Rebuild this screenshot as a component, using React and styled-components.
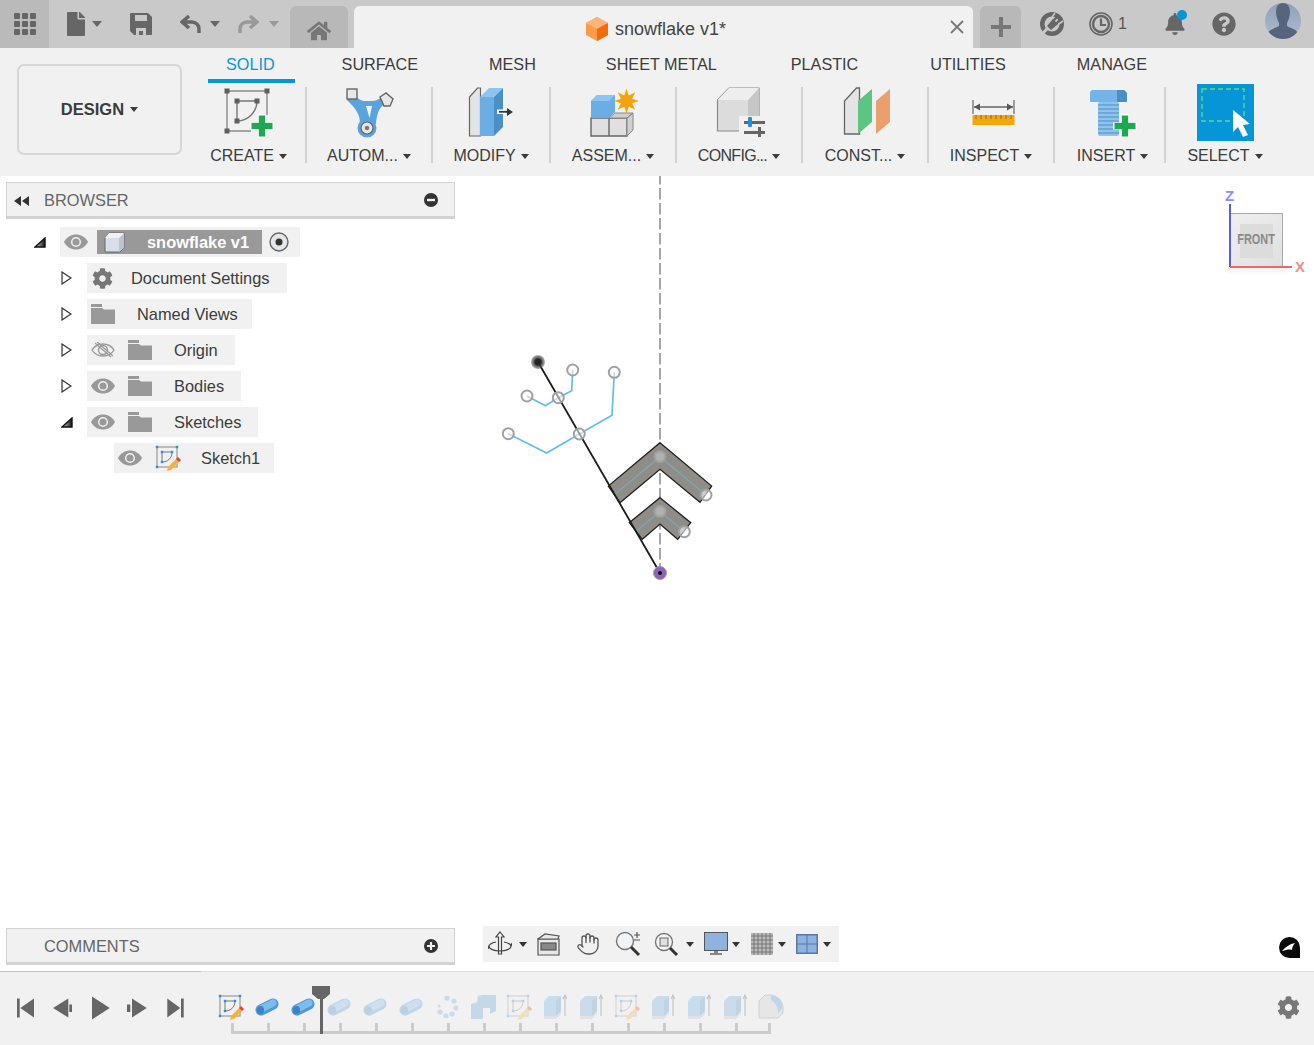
import React from "react";
import styled, { createGlobalStyle } from "styled-components";
import { FaBell, FaCog, FaFile, FaHome, FaQuestionCircle } from "react-icons/fa";
import { Hand } from "lucide-react";

const GlobalStyle = createGlobalStyle`
  html, body {
    margin: 0;
    padding: 0;
    background: #ffffff;
    font-family: "Liberation Sans", Arial, sans-serif;
    color: #3c3c3c;
  }
  * { box-sizing: border-box; }
`;

const Page = styled.div`
  width: 1314px;
  height: 1045px;
  display: flex;
  flex-direction: column;
  overflow: hidden;
`;

/* ---------- top bar ---------- */

const TopBar = styled.header`
  height: 48px;
  flex: none;
  display: flex;
  background: #c9c9c9;
`;

const GridCell = styled.div`
  width: 49px;
  display: flex;
  align-items: center;
  justify-content: center;
  background: #bababa;
`;

const BarItem = styled.div`
  height: 48px;
  flex: none;
  margin-left: ${(p) => p.$ml || 0}px;
  display: flex;
  align-items: center;
  color: #666666;
`;

const Caret = styled.span`
  display: inline-block;
  flex: none;
  width: 0;
  height: 0;
  margin-left: ${(p) => p.$ml || 0}px;
  border-left: ${(p) => p.$size || 4.5}px solid transparent;
  border-right: ${(p) => p.$size || 4.5}px solid transparent;
  border-top: ${(p) => (p.$size || 4.5) + 1}px solid ${(p) => p.$color || "#3c3c3c"};
`;

const HomeTab = styled.div`
  width: 58px;
  height: 42px;
  margin: 6px 0 0 ${(p) => p.$ml}px;
  padding-top: 13px;
  display: flex;
  justify-content: center;
  background: #b8b8b8;
  border-radius: 6px 6px 0 0;
  color: #777777;
`;

const DocTab = styled.div`
  position: relative;
  width: 619px;
  height: 42px;
  margin: 6px 0 0 6px;
  padding: 4px 15px 0 0;
  display: flex;
  align-items: center;
  justify-content: center;
  gap: 7px;
  background: #f1f1f1;
  border-radius: 6px 6px 0 0;
  font-size: 18px;
  color: #444444;
`;

const CloseGlyph = styled.svg`
  position: absolute;
  right: 9px;
  top: 14px;
`;

const PlusTab = styled.div`
  width: 41px;
  height: 42px;
  margin: 6px 0 0 7px;
  display: flex;
  align-items: center;
  justify-content: center;
  background: #b8b8b8;
  border-radius: 6px 6px 0 0;
`;

const JobCount = styled.span`
  margin-left: 5px;
  font-size: 16px;
  color: #555555;
`;

const BellWrap = styled.div`
  position: relative;
  display: flex;
`;

const BellDot = styled.span`
  position: absolute;
  right: -1px;
  top: -3px;
  width: 10px;
  height: 10px;
  border-radius: 50%;
  background: #0696d7;
`;

const Avatar = styled.div`
  width: 36px;
  height: 36px;
  margin-top: -6px;
  border-radius: 50%;
  overflow: hidden;
  background: linear-gradient(#8fa0b8, #aebcd2);
`;

/* ---------- ribbon ---------- */

const Ribbon = styled.section`
  height: 128px;
  flex: none;
  display: flex;
  gap: 8px;
  padding-left: 17px;
  background: #f1f1f1;
`;

const DesignButton = styled.div`
  width: 165px;
  height: 91px;
  margin-top: 16px;
  display: flex;
  align-items: center;
  justify-content: center;
  gap: 6px;
  border: 2px solid #d6d6d6;
  border-radius: 7px;
  font-size: 16.5px;
  font-weight: 700;
`;

const RibbonBody = styled.div`
  display: flex;
  flex-direction: column;
`;

const TabRow = styled.nav`
  height: 36px;
  display: flex;
  padding-left: 18px;
`;

const Tab = styled.div`
  height: 35px;
  margin-left: ${(p) => p.$ml || 0}px;
  padding: 7px 20px 0 18px;
  font-size: 16.2px;
  line-height: 18px;
  color: ${(p) => (p.$active ? "#0696d7" : "#3c3c3c")};
  border-bottom: 4px solid ${(p) => (p.$active ? "#0696d7" : "transparent")};
`;

const ToolRow = styled.div`
  display: flex;
`;

const ToolGroup = styled.div`
  width: ${(p) => p.$width}px;
  padding-left: ${(p) => p.$pad || 0}px;
  display: flex;
  flex-direction: column;
  align-items: center;
`;

const IconSlot = styled.div`
  height: 62px;
  display: flex;
  align-items: flex-start;
`;

const ToolLabel = styled.div`
  display: flex;
  align-items: center;
  gap: 5px;
  height: 18px;
  margin-top: 1px;
  font-size: 16px;
  white-space: nowrap;
  letter-spacing: ${(p) => p.$spacing || 0}px;
`;

const Separator = styled.div`
  width: 2px;
  height: 76px;
  margin-top: 3px;
  flex: none;
  background: #d2d2d2;
`;

/* ---------- viewport ---------- */

const Viewport = styled.main`
  position: relative;
  flex: 1;
  min-height: 0;
  display: flex;
  flex-direction: column;
  justify-content: space-between;
  padding: 6px 14px 6px 6px;
  background: #ffffff;
`;

const SketchCanvas = styled.svg`
  position: absolute;
  left: 0;
  top: 0;
`;

const Panel = styled.div`
  position: relative;
  width: 449px;
  height: 37px;
  flex: none;
  display: flex;
  align-items: center;
  padding: 1px 0 0 37px;
  background: #f1f1f1;
  border: 1px solid #d2d2d2;
  border-bottom-width: 3px;
  font-size: 16.4px;
  color: #666666;
`;

const PanelArrows = styled.svg`
  position: absolute;
  left: 7px;
  top: 13px;
`;

const PanelToggle = styled.svg`
  position: absolute;
  right: 16px;
  top: 10px;
`;

const LeftColumn = styled.div`
  position: relative;
  width: 449px;
`;

const Tree = styled.ul`
  list-style: none;
  margin: 8px 0 0;
  padding: 0;
  display: flex;
  flex-direction: column;
  gap: 6px;
`;

const TreeRow = styled.li`
  display: flex;
  align-items: center;
  height: 30px;
  padding-left: ${(p) => 28 + p.$level * 27}px;
`;

const Expander = styled.div`
  width: 26px;
  flex: none;
  display: flex;
  align-items: center;
`;

const Node = styled.div`
  display: flex;
  height: 30px;
  background: #f1f1f1;
  font-size: 16.4px;
  color: #3c3c3c;
`;

const NodeIcon = styled.div`
  width: ${(p) => p.$width || 37}px;
  flex: none;
  display: flex;
  align-items: center;
  padding-left: ${(p) => p.$pad ?? 4}px;
  color: #777777;
`;

const NodeLabel = styled.div`
  display: flex;
  align-items: center;
  padding: 0 ${(p) => p.$right}px 0 13px;
  white-space: nowrap;
`;

const SelectedNode = styled.div`
  width: 165px;
  height: 24px;
  margin-top: 3px;
  display: flex;
  align-items: center;
  gap: 22px;
  padding-left: 7px;
  background: #999999;
  color: #ffffff;
  font-weight: 700;
`;

const RadioCell = styled.div`
  width: 38px;
  display: flex;
  align-items: center;
  padding-left: 7px;
`;

const BottomRow = styled.div`
  position: relative;
  display: flex;
  align-items: flex-start;
`;

const NavBar = styled.div`
  width: 356px;
  height: 36px;
  margin: -2px 0 0 28px;
  display: flex;
  align-items: center;
  padding-left: 5px;
  background: #f1f1f1;
`;

const NavItem = styled.div`
  display: flex;
  flex: none;
  margin-left: ${(p) => p.$ml || 0}px;
  color: #555555;
`;

const BrandMark = styled.svg`
  margin: 9px 0 0 auto;
`;

const ViewCube = styled.div`
  position: absolute;
  left: 1216px;
  top: 12px;
  width: 88px;
  height: 88px;
`;

const CubeFace = styled.div`
  position: absolute;
  left: 14px;
  top: 25px;
  width: 53px;
  height: 54px;
  display: flex;
  align-items: center;
  justify-content: center;
  background: linear-gradient(135deg, #efefef, #e0e0e0);
  border: 1px solid #a8a8a8;
  border-left: none;
  border-bottom: none;
`;

const CubeCentre = styled.div`
  width: 33px;
  height: 34px;
  display: flex;
  align-items: center;
  justify-content: center;
  background: #dcdcdc;
`;

const FrontText = styled.span`
  display: inline-block;
  margin-top: -3px;
  transform: scaleX(0.78);
  font-size: 14px;
  font-weight: 700;
  color: #8a8a8a;
`;

const AxisZ = styled.div`
  position: absolute;
  left: 13px;
  top: 16px;
  width: 2px;
  height: 63px;
  background: #5a5cf0;
`;

const AxisX = styled.div`
  position: absolute;
  left: 14px;
  top: 78px;
  width: 62px;
  height: 2px;
  background: #e86a6a;
  box-shadow: -4px 3px 4px rgba(0, 0, 0, 0.12);
`;

const AxisLetter = styled.span`
  position: absolute;
  left: ${(p) => p.$left}px;
  top: ${(p) => p.$top}px;
  font-size: 15px;
  font-weight: 700;
  color: ${(p) => p.$color};
`;

/* ---------- timeline ---------- */

const Timeline = styled.footer`
  position: relative;
  height: 74px;
  flex: none;
  display: flex;
  align-items: flex-start;
  background: #f1f1f1;
  border-top: 1px solid #dcdcdc;

  &::before {
    content: "";
    position: absolute;
    left: 0;
    top: -1px;
    width: 201px;
    height: 1px;
    background: #c4c4c4;
  }
`;

const Controls = styled.div`
  display: flex;
  gap: 14px;
  margin: 23px 0 0 14px;

  svg {
    overflow: visible;
  }
`;

const Track = styled.div`
  position: relative;
  margin: 20px 0 0 23px;
`;

const TrackItems = styled.div`
  display: flex;
`;

const TrackItem = styled.div`
  width: 36px;
  height: 30px;
  display: flex;
  align-items: center;
  justify-content: center;
  opacity: ${(p) => (p.$faded ? 0.3 : 1)};
`;

const Ruler = styled.div`
  display: flex;
  margin: 1px 0 0 18px;
`;

const RulerStep = styled.div`
  width: 36px;
  height: 11px;
  border-left: 3px solid #cccccc;
  border-bottom: 3px solid #cccccc;
  border-right: ${(p) => (p.$last ? "3px solid #cccccc" : "none")};
`;

const Marker = styled.svg`
  position: absolute;
  left: 98px;
  top: -6px;
`;

const SettingsButton = styled.div`
  margin: 24px 14px 0 auto;
  display: flex;
  color: #777777;
`;

/* ---------- icons ---------- */

const GridIcon = () => (
  <svg width="22" height="22" viewBox="0 0 22 22" fill="#666666">
    {[0, 8, 16].flatMap((y) =>
      [0, 8, 16].map((x) => <rect key={`${x}-${y}`} x={x} y={y} width="6" height="6" rx="1" />)
    )}
  </svg>
);

const SaveIcon = () => (
  <svg width="22" height="22" viewBox="0 0 22 22">
    <path d="M1 0h17l4 4v17a1 1 0 0 1-1 1H4l-4-4V1a1 1 0 0 1 1-1z" fill="#666666" />
    <rect x="5" y="2" width="12" height="6" fill="#c9c9c9" />
    <path d="M6 22v-7h10v7h-3v-4H9v4z" fill="#c9c9c9" />
  </svg>
);

const UndoIcon = ({ color, flip }) => (
  <svg width="21" height="18" viewBox="0 0 21 18" style={flip ? { transform: "scaleX(-1)" } : undefined}>
    <path d="M9 1 2 7l7 6M3 7h9a7 7 0 0 1 7 7v4" fill="none" stroke={color} strokeWidth="3.4" />
  </svg>
);

const CubeLogo = () => (
  <svg width="22" height="24" viewBox="0 0 22 24">
    <path d="M11 0 22 6v12l-11 6L0 18V6z" fill="#ff9a4a" />
    <path d="M11 0 22 6 11 12 0 6z" fill="#ffb27a" />
    <path d="M11 12 22 6v12l-11 6z" fill="#f26d0a" />
  </svg>
);

const UpdateIcon = () => (
  <svg width="24" height="24" viewBox="0 0 24 24">
    <circle cx="12" cy="12" r="12" fill="#666666" />
    <circle cx="12" cy="12" r="7.500" fill="#c9c9c9" />
    <path d="M3 21 9 15" stroke="#c9c9c9" strokeWidth="3" />
    <path d="M7 14 13 7l5 5-7 6z" fill="#666666" />
    <path d="M13 9l5-5M16 12l5-5" stroke="#666666" strokeWidth="2.400" />
    <path d="M15 1 12 5M23 9l-4 3" stroke="#c9c9c9" strokeWidth="1.600" />
  </svg>
);

const ClockIcon = () => (
  <svg width="24" height="24" viewBox="0 0 24 24" fill="none" stroke="#666666">
    <circle cx="12" cy="12" r="11" strokeWidth="1.6" />
    <circle cx="12" cy="12" r="8" strokeWidth="2.4" />
    <path d="M12 6.5V13h5" strokeWidth="2.2" />
  </svg>
);

const AvatarFigure = () => (
  <svg width="36" height="36" viewBox="0 0 36 36" fill="#56657c">
    <path d="M11 9c0-6 3-9 7-9s7 3 7 9c0 5-2 9-3 11v3c3 2 9 3 11 7v6H3v-6c2-4 8-5 11-7v-3c-1-2-3-6-3-11z" />
  </svg>
);

const Plus = ({ x, y, size = 21, color = "#1fa84f" }) => {
  const t = size * 0.3;
  const half = size / 2;
  return (
    <g fill={color}>
      <rect x={x - half} y={y - t / 2} width={size} height={t} />
      <rect x={x - t / 2} y={y - half} width={t} height={size} />
    </g>
  );
};

const CreateIcon = () => (
  <svg width="54" height="54" viewBox="0 0 54 54">
    <path d="M5 7h40M5 7v40M5 47h24M45 7v24" stroke="#8a8a8a" strokeWidth="1.4" fill="none" />
    <path d="M15 17h20M15 17v20M35 17c0 10-8 20-20 20" stroke="#777777" strokeWidth="1.4" fill="none" />
    {[[5, 7], [45, 7], [5, 47], [15, 17], [35, 17], [15, 37]].map(([x, y]) => (
      <rect key={`${x}-${y}`} x={x - 2.5} y={y - 2.5} width="5" height="5" fill="#5f5f5f" />
    ))}
    <Plus x={40} y={42} size={24} color="#ffffff" />
    <Plus x={40} y={42} />
  </svg>
);

const AutomateIcon = () => (
  <svg width="54" height="54" viewBox="0 0 54 54">
    <path d="M9 11c6 2 10 6 13 6h8c4 0 8-2 12-6l5 5c-4 3-9 7-11 13-1 3-2 7-2 11H18c0-5-1-9-3-12-2-4-6-8-10-12z" fill="#5ba3dc" />
    <path d="M24 22h6l-2.500 12z" fill="#f1f1f1" />
    <rect x="5" y="5" width="10" height="10" fill="#e8e8e8" stroke="#666666" strokeWidth="1.4" />
    <path d="M38 13l6-4 7 6-3 7h-6z" fill="#e8e8e8" stroke="#666666" strokeWidth="1.4" />
    <circle cx="25" cy="44" r="9.500" fill="#5ba3dc" />
    <circle cx="25" cy="44" r="6" fill="#e8e8e8" stroke="#666666" strokeWidth="1.2" />
    <circle cx="25" cy="44" r="2.300" fill="#777777" />
  </svg>
);

const ModifyIcon = () => (
  <svg width="54" height="54" viewBox="0 0 54 54">
    <path d="M5.5 52V13l8-9h3v48z" fill="#e4e4e4" stroke="#666666" strokeWidth="1.2" />
    <path d="M16 13 25 4h14l-9 9z" fill="#8cc4f2" />
    <rect x="16" y="13" width="14" height="39" fill="#6aaee3" />
    <path d="M30 13 39 4v39l-9 9z" fill="#4a90c8" />
    <rect x="33" y="25.500" width="8" height="4.500" fill="#ffffff" />
    <path d="M35 27.800h9" stroke="#333333" strokeWidth="1.800" />
    <path d="M43 24v8l6-4z" fill="#333333" />
  </svg>
);

const starPoints = Array.from({ length: 16 }, (_, i) => {
  const angle = (i * Math.PI) / 8;
  const radius = i % 2 === 0 ? 12.5 : 6;
  return `${40.5 + radius * Math.sin(angle)},${17 - radius * Math.cos(angle)}`;
}).join(" ");

const AssembleIcon = () => (
  <svg width="54" height="54" viewBox="0 0 54 54">
    <path d="M5 52V34h18v18zM23 52V34h18v18z" fill="#e0e0e0" stroke="#666666" strokeWidth="1.4" />
    <path d="M41 34l6-5v17l-6 6zM23 34l6-5h18l-6 5z" fill="#d0d0d0" stroke="#888888" strokeWidth="1" />
    <path d="M5 34V17l6-6h18v17l-6 6z" fill="#6aaee3" />
    <path d="M5 17l6-6h18l-6 6z" fill="#8cc4f2" />
    <polygon points={starPoints} fill="#f5a30a" />
  </svg>
);

const ConfigureIcon = () => (
  <svg width="54" height="54" viewBox="0 0 54 54">
    <path d="M5.500 16 17 4h30v31L36 47H5.500z" fill="#dcdcdc" stroke="#8a8a8a" strokeWidth="1.2" />
    <path d="M36 16 47 4v31L36 47z" fill="#c6c6c6" />
    <path d="M5.500 16 17 4h30L36 16z" fill="#eeeeee" />
    <rect x="27" y="32" width="27" height="22" fill="#f1f1f1" />
    <rect x="32" y="37" width="21" height="3" fill="#666666" />
    <rect x="32" y="47" width="21" height="3" fill="#666666" />
    <rect x="36" y="33" width="4" height="10" rx="1" fill="#1f8fe0" />
    <rect x="46" y="43" width="3" height="10" fill="#666666" />
  </svg>
);

const ConstructIcon = () => (
  <svg width="54" height="54" viewBox="0 0 54 54">
    <path d="M6.500 50V17l12-13h3v46z" fill="#e4e4e4" stroke="#666666" strokeWidth="1.3" />
    <path d="M20 17 34 5v33L20 50z" fill="#5cc581" />
    <path d="M38 17 52 5v33L38 50z" fill="#e9a06c" />
  </svg>
);

const InspectIcon = () => (
  <svg width="54" height="54" viewBox="0 0 54 54">
    <path d="M9 16v14M50 16v14" stroke="#666666" strokeWidth="1.2" />
    <path d="M10 23h39" stroke="#666666" strokeWidth="1.6" />
    <path d="M10 23l6-3.500v7zM49 23l-6-3.500v7z" fill="#555555" />
    <rect x="8.500" y="31" width="42" height="10" fill="#f5a60f" />
    <path d="M12 31v4M17 31v4M22 31v4M27 31v4M32 31v4M37 31v4M42 31v4M47 31v4" stroke="#8a6a20" strokeWidth="1" />
  </svg>
);

const InsertIcon = () => (
  <svg width="54" height="54" viewBox="0 0 54 54">
    <g transform="translate(-3 0)">
      <rect x="15" y="18" width="21" height="34" rx="2" fill="#90c2ee" />
      {[21, 25, 29, 33, 37, 41, 45, 49].map((y) => (
        <path key={y} d="M15 0h21" transform={`translate(0 ${y})`} stroke="#5c9bd0" strokeWidth="1.3" />
      ))}
      <path d="M9 6h32l3 3v9H7V8z" fill="#74b4ea" />
      <path d="M34 6h7l3 3v9H34z" fill="#4a90c8" />
      <Plus x={42} y={42} size={24} color="#ffffff" />
      <Plus x={42} y={42} />
    </g>
  </svg>
);

const SelectIcon = () => (
  <svg width="57" height="57" viewBox="0 0 57 57">
    <rect width="57" height="57" fill="#0696d7" />
    <rect x="5" y="5" width="42" height="32" fill="none" stroke="#5fd38a" strokeWidth="1.4" strokeDasharray="5 3" />
    <path d="M36 26v22l5-5 5 10 5-2-5-10 7-1z" fill="#ffffff" />
  </svg>
);

const EyeIcon = ({ off }) => (
  <svg width="24" height="16" viewBox="0 0 24 16">
    {off ? (
      <>
        <path d="M1 8c5-8 17-8 22 0-5 8-17 8-22 0z" fill="none" stroke="#999999" strokeWidth="1.400" />
        <circle cx="12" cy="8" r="4.500" fill="none" stroke="#999999" strokeWidth="1.400" />
        <path d="M4 1l16 14M6 0l16 14" stroke="#999999" strokeWidth="1.200" />
      </>
    ) : (
      <>
        <path d="M0 8c5-10 19-10 24 0-5 10-19 10-24 0z" fill="#999999" />
        <circle cx="12" cy="8" r="4.300" fill="none" stroke="#f1f1f1" strokeWidth="1.500" />
      </>
    )}
  </svg>
);

const FolderIcon = () => (
  <svg width="24" height="20" viewBox="0 0 24 20" fill="#999999">
    <rect x="0" y="0" width="11" height="3" />
    <path d="M0 4h11l2 1.500h11V20H0z" />
  </svg>
);

const SmallCube = () => (
  <svg width="21" height="21" viewBox="0 0 21 21">
    <path d="M1 6 5 1h15v15l-4 4H2a1 1 0 0 1-1-1z" fill="#d9dfe8" stroke="#666666" strokeWidth="1" />
    <path d="M15 6 20 1v15l-5 4z" fill="#bcc4d0" />
    <path d="M1 6 5 1h15l-5 5z" fill="#eef1f5" />
  </svg>
);

const SketchIcon = () => (
  <svg width="26" height="26" viewBox="0 0 26 26">
    <rect x="2" y="2" width="20" height="20" fill="none" stroke="#999999" strokeWidth="1.2" />
    <path d="M7 7h10M7 7v10M17 7c0 6-4 10-10 10" fill="none" stroke="#777777" strokeWidth="1" />
    {[[2, 2], [22, 2], [2, 22], [7, 7], [17, 7], [7, 17]].map(([x, y]) => (
      <rect key={`${x}-${y}`} x={x - 1.2} y={y - 1.2} width="2.400" height="2.400" fill="#2b8fe0" />
    ))}
    <path d="M13 22l8-8 3 3-8 8-4 1z" fill="#f3b33d" />
    <path d="M21 14l2-2 3 3-2 2z" fill="#ef3b3b" />
  </svg>
);

const TubeIcon = () => (
  <svg width="24" height="18" viewBox="0 0 24 18">
    <path d="M6 12 18 6" stroke="#4f97d6" strokeWidth="11" strokeLinecap="round" />
    <path d="M6 11 18 5" stroke="#7dbcf0" strokeWidth="7" strokeLinecap="round" />
    <ellipse cx="5.500" cy="12" rx="3.500" ry="4" fill="#3d83c2" />
  </svg>
);

const DotsIcon = () => (
  <svg width="22" height="22" viewBox="0 0 22 22" fill="#6aaee3">
    {[[11, 2], [18, 5], [20, 12], [16, 18], [10, 20], [4, 16], [3, 10]].map(([x, y], i) => (
      <circle key={i} cx={x} cy={y} r={i === 6 ? 1.5 : 2.6} />
    ))}
  </svg>
);

const UnionIcon = () => (
  <svg width="26" height="24" viewBox="0 0 26 24">
    <path d="M8 0h18v16l-6 3v-6H13v11H1V9l6-1z" fill="#5b9fd6" />
    <path d="M1 9l7-3V0l4 0-4 3v5z" fill="#8cc4f2" />
  </svg>
);

const ExtrudeIcon = () => (
  <svg width="24" height="26" viewBox="0 0 24 26">
    <path d="M1 24V7l5-5h12v17l-5 5z" fill="#6aaee3" />
    <path d="M13 7l5-5v17l-5 5z" fill="#4a90c8" />
    <path d="M1 22h12l5-5v3l-5 5H1z" fill="#c0c0c0" />
    <path d="M22 22V2M20 5l2-4 2 4" stroke="#666666" strokeWidth="1.2" fill="none" />
  </svg>
);

const FilletIcon = () => (
  <svg width="26" height="26" viewBox="0 0 26 26">
    <path d="M1 24V7l6-6h6c7 1 12 6 12 13v5l-5 5z" fill="#d0d0d0" stroke="#888888" />
    <path d="M13 1c7 1 12 6 12 13l-5 5c0-7-3-11-7-13z" fill="#4a9ae0" />
  </svg>
);

const OrbitIcon = () => (
  <svg width="24" height="26" viewBox="0 0 24 26" fill="none" stroke="#444444" strokeWidth="1.200">
    <path d="M12 1l4 5h-2.500v17h-3V6H8z" fill="#f1f1f1" />
    <path d="M8 11C3 12 1 14 1 15c0 3 5 5 11 5s11-2 11-5c0-1-2-3-7-4" />
    <path d="M1 15l-1 3M23 15l1-3" />
  </svg>
);

const FilmIcon = () => (
  <svg width="23" height="24" viewBox="0 0 23 24" fill="#e8e8e8" stroke="#555555" strokeWidth="1.200">
    <path d="M1 7V23h21V7z" />
    <path d="M1 7l7-5 14 2-1 3z" />
    <rect x="4" y="11" width="15" height="7" fill="#888888" />
  </svg>
);

const ZoomInIcon = () => (
  <svg width="26" height="26" viewBox="0 0 26 26" fill="none">
    <circle cx="10" cy="10" r="8.500" fill="#eef4fa" stroke="#777777" strokeWidth="1.400" />
    <path d="M16 16l8 8" stroke="#333333" strokeWidth="3" />
    <path d="M22 1v6M19 4h6M19 9h6" stroke="#555555" strokeWidth="1.200" />
  </svg>
);

const ZoomWindowIcon = () => (
  <svg width="24" height="24" viewBox="0 0 24 24" fill="none">
    <circle cx="10" cy="10" r="8.500" fill="#f5f5f5" stroke="#777777" strokeWidth="1.400" />
    <rect x="6" y="6" width="8" height="8" fill="#e0e0e0" stroke="#666666" />
    <path d="M16 16l7 7" stroke="#333333" strokeWidth="3" />
  </svg>
);

const DisplayIcon = () => (
  <svg width="24" height="24" viewBox="0 0 24 24">
    <rect x="0.500" y="0.500" width="23" height="18" fill="#8fb2de" stroke="#555555" />
    <path d="M10 19h4v2h4v2H6v-2h4z" fill="#888888" />
  </svg>
);

const GridDisplayIcon = () => (
  <svg width="22" height="22" viewBox="0 0 22 22">
    <rect width="22" height="22" fill="#bbbbbb" />
    <path d="M0 3h22M0 7h22M0 11h22M0 15h22M0 19h22M3 0v22M7 0v22M11 0v22M15 0v22M19 0v22" stroke="#777777" strokeWidth="1" />
  </svg>
);

const ViewportsIcon = () => (
  <svg width="22" height="20" viewBox="0 0 22 20">
    <rect width="22" height="20" fill="#5878aa" />
    <rect x="1.500" y="1.500" width="9" height="8" fill="#8fb2de" />
    <rect x="11.500" y="1.500" width="9" height="8" fill="#8fb2de" />
    <rect x="1.500" y="10.500" width="9" height="8" fill="#8fb2de" />
    <rect x="11.500" y="10.500" width="9" height="8" fill="#8fb2de" />
  </svg>
);

const Triangle = ({ open, id }) =>
  open ? (
    <svg width="12" height="11" viewBox="0 0 12 11">
      <defs>
        <linearGradient id={id} x1="0" x2="1">
          <stop offset="0" stopColor="#dddddd" />
          <stop offset="1" stopColor="#111111" />
        </linearGradient>
      </defs>
      <path d="M1 10 11 1v9z" fill={`url(#${id})`} stroke="#111111" strokeWidth="1.400" />
    </svg>
  ) : (
    <svg width="11" height="14" viewBox="0 0 11 14">
      <path d="M1 1l9 6-9 6z" fill="#ffffff" stroke="#333333" strokeWidth="1.200" />
    </svg>
  );

/* ---------- data ---------- */

const tabs = [
  { label: "SOLID", active: true },
  { label: "SURFACE", ml: 29 },
  { label: "MESH", ml: 33 },
  { label: "SHEET METAL", ml: 32 },
  { label: "PLASTIC", ml: 36 },
  { label: "UTILITIES", ml: 34 },
  { label: "MANAGE", ml: 33 },
];

const tools = [
  { label: "CREATE", width: 115, pad: 2, Icon: CreateIcon },
  { label: "AUTOM...", width: 124, Icon: AutomateIcon },
  { label: "MODIFY", width: 116, Icon: ModifyIcon },
  { label: "ASSEM...", width: 124, Icon: AssembleIcon },
  { label: "CONFIG...", width: 124, spacing: -0.7, Icon: ConfigureIcon },
  { label: "CONST...", width: 124, Icon: ConstructIcon },
  { label: "INSPECT", width: 124, Icon: InspectIcon },
  { label: "INSERT", width: 109, pad: 6, Icon: InsertIcon },
  { label: "SELECT", width: 118, Icon: SelectIcon },
];

const treeRows = [
  { level: 1, label: "Document Settings", right: 18, cells: [{ kind: "gear", width: 31 }] },
  { level: 1, label: "Named Views", right: 14, cells: [{ kind: "folder" }] },
  { level: 1, label: "Origin", right: 17, cells: [{ kind: "eyeOff" }, { kind: "folder" }] },
  { level: 1, label: "Bodies", right: 17, cells: [{ kind: "eye" }, { kind: "folder" }] },
  { level: 1, label: "Sketches", right: 17, open: true, cells: [{ kind: "eye" }, { kind: "folder" }] },
  { level: 2, label: "Sketch1", right: 14, leaf: true, cells: [{ kind: "eye" }, { kind: "sketch" }] },
];

const cellIcon = (kind) => {
  if (kind === "gear") return <FaCog size={21} />;
  if (kind === "folder") return <FolderIcon />;
  if (kind === "eye") return <EyeIcon />;
  if (kind === "eyeOff") return <EyeIcon off />;
  return <SketchIcon />;
};

const timelineItems = [
  { Icon: SketchIcon },
  { Icon: TubeIcon },
  { Icon: TubeIcon },
  { Icon: TubeIcon, faded: true },
  { Icon: TubeIcon, faded: true },
  { Icon: TubeIcon, faded: true },
  { Icon: DotsIcon, faded: true },
  { Icon: UnionIcon, faded: true },
  { Icon: SketchIcon, faded: true },
  { Icon: ExtrudeIcon, faded: true },
  { Icon: ExtrudeIcon, faded: true },
  { Icon: SketchIcon, faded: true },
  { Icon: ExtrudeIcon, faded: true },
  { Icon: ExtrudeIcon, faded: true },
  { Icon: ExtrudeIcon, faded: true },
  { Icon: FilletIcon, faded: true },
];

const transport = [
  "M3 3.500h2.700v19H3zM6.300 13 20 3.500v19z",
  "M1 13 16.300 3.500v19zM17.300 9.500H20V17h-2.700z",
  "M2 1.500 19.700 13 2 24.500z",
  "M-1 9.500h3.300V17H-1zM4 3.500 18.700 13 4 22.500z",
  "M1.300 3.500 14.300 13l-13 9.500zM15 3.500h2.700v19H15z",
];

const navItems = [
  { Icon: OrbitIcon },
  { caret: true, ml: 7 },
  { Icon: FilmIcon, ml: 10 },
  { Icon: () => <Hand size={24} strokeWidth={1.3} />, ml: 16 },
  { Icon: ZoomInIcon, ml: 15 },
  { Icon: ZoomWindowIcon, ml: 13 },
  { caret: true, ml: 8 },
  { Icon: DisplayIcon, ml: 10 },
  { caret: true, ml: 4 },
  { Icon: GridDisplayIcon, ml: 11 },
  { caret: true, ml: 5 },
  { Icon: ViewportsIcon, ml: 10 },
  { caret: true, ml: 5 },
];

const Joint = ({ x, y, r = 5.5, fill = "#ffffff", fillOpacity = 0.55 }) => (
  <circle cx={x} cy={y - 176} r={r} fill={fill} fillOpacity={fillOpacity} stroke="#a0a0a0" strokeWidth="2" />
);

const toCanvas = (points) => points.map(([x, y]) => `${x},${y - 176}`).join(" ");

const SnowflakeSketch = () => (
  <SketchCanvas width="1314" height="795" viewBox="0 0 1314 795">
    <defs>
      <radialGradient id="startDot">
        <stop offset="0.4" stopColor="#222222" />
        <stop offset="1" stopColor="#666666" stopOpacity="0.5" />
      </radialGradient>
    </defs>
    <path d="M660 0V397" stroke="#a6a6a6" strokeWidth="2" strokeDasharray="11.500 3.500" strokeDashoffset="3" />
    <polygon
      points={toCanvas([[660, 442.7], [711.7, 486], [700, 502.3], [660, 469.3], [620, 502.7], [608.3, 486]])}
      fill="#8f8d85"
      stroke="#222222"
      strokeWidth="1.300"
    />
    <polygon
      points={toCanvas([[660, 497.7], [690.7, 522.7], [677.7, 539.3], [660, 524], [642.3, 539.3], [629.3, 522.7]])}
      fill="#8f8d85"
      stroke="#222222"
      strokeWidth="1.300"
    />
    <g fill="none" stroke="#63bdea" strokeWidth="1.700">
      <polyline points={toCanvas([[527, 396], [545.3, 405.7], [558.3, 397.7], [571.7, 390.7], [572.7, 370]])} />
      <polyline points={toCanvas([[614.3, 372.3], [612, 415.3], [579.3, 434], [546.7, 453], [508.3, 433.7]])} />
      <polyline points={toCanvas([[615, 494.3], [660, 456.7], [706, 495]])} strokeOpacity="0.55" strokeWidth="1.300" />
      <polyline points={toCanvas([[636.7, 530.7], [660, 511.3], [684.3, 531.7]])} strokeOpacity="0.55" strokeWidth="1.300" />
    </g>
    <path d="M538 186 660 397" stroke="#1c1c1c" strokeWidth="1.800" />
    <circle cx="538" cy="186" r="7" fill="url(#startDot)" />
    <Joint x={572.7} y={370} />
    <Joint x={614.3} y={372.3} />
    <Joint x={527} y={396} />
    <Joint x={558.3} y={397.7} />
    <Joint x={508.3} y={433.7} />
    <Joint x={579.3} y={434} />
    <Joint x={660} y={456.7} fill="#b5b5b0" fillOpacity={0.9} />
    <Joint x={660} y={511.3} fill="#b5b5b0" fillOpacity={0.9} />
    <Joint x={706} y={495} />
    <Joint x={684.3} y={531.7} />
    <circle cx="660" cy="397" r="6.500" fill="#8a63b5" stroke="#a0a0a0" />
    <circle cx="660" cy="397" r="2" fill="#111111" />
  </SketchCanvas>
);

export default function App() {
  return (
    <Page>
      <GlobalStyle />
      <TopBar>
        <GridCell>
          <GridIcon />
        </GridCell>
        <BarItem $ml={15}>
          <FaFile size={24} />
          <Caret $ml={4} $size={5} $color="#666666" />
        </BarItem>
        <BarItem $ml={28}>
          <SaveIcon />
        </BarItem>
        <BarItem $ml={28}>
          <UndoIcon color="#666666" />
          <Caret $ml={9} $size={5} $color="#666666" />
        </BarItem>
        <BarItem $ml={18}>
          <UndoIcon color="#999999" flip />
          <Caret $ml={10} $size={5} $color="#999999" />
        </BarItem>
        <HomeTab $ml={11}>
          <FaHome size={24} />
        </HomeTab>
        <DocTab>
          <CubeLogo />
          <span>snowflake v1*</span>
          <CloseGlyph width="14" height="14" viewBox="0 0 14 14">
            <path d="M1 1l12 12M13 1 1 13" stroke="#777777" strokeWidth="1.800" />
          </CloseGlyph>
        </DocTab>
        <PlusTab>
          <svg width="20" height="20" viewBox="0 0 20 20">
            <path d="M10 0v20M0 10h20" stroke="#777777" strokeWidth="4" />
          </svg>
        </PlusTab>
        <BarItem $ml={19}>
          <UpdateIcon />
        </BarItem>
        <BarItem $ml={25}>
          <ClockIcon />
          <JobCount>1</JobCount>
        </BarItem>
        <BarItem $ml={37}>
          <BellWrap>
            <FaBell size={22} />
            <BellDot />
          </BellWrap>
        </BarItem>
        <BarItem $ml={26}>
          <FaQuestionCircle size={24} />
        </BarItem>
        <BarItem $ml={29}>
          <Avatar>
            <AvatarFigure />
          </Avatar>
        </BarItem>
      </TopBar>

      <Ribbon>
        <DesignButton>
          DESIGN
          <Caret />
        </DesignButton>
        <RibbonBody>
          <TabRow>
            {tabs.map((tab) => (
              <Tab key={tab.label} $active={tab.active} $ml={tab.ml}>
                {tab.label}
              </Tab>
            ))}
          </TabRow>
          <ToolRow>
            {tools.map(({ label, spacing, width, pad, Icon }, i) => (
              <React.Fragment key={label}>
                <ToolGroup $width={width} $pad={pad}>
                  <IconSlot>
                    <Icon />
                  </IconSlot>
                  <ToolLabel $spacing={spacing}>
                    {label}
                    <Caret />
                  </ToolLabel>
                </ToolGroup>
                {i < tools.length - 1 && <Separator />}
              </React.Fragment>
            ))}
          </ToolRow>
        </RibbonBody>
      </Ribbon>

      <Viewport>
        <SnowflakeSketch />
        <ViewCube>
          <CubeFace>
            <CubeCentre>
              <FrontText>FRONT</FrontText>
            </CubeCentre>
          </CubeFace>
          <AxisZ />
          <AxisX />
          <AxisLetter $left={9} $top={-1} $color="#8d8df5">Z</AxisLetter>
          <AxisLetter $left={79} $top={70} $color="#f08c8c">X</AxisLetter>
        </ViewCube>
        <LeftColumn>
          <Panel>
            <PanelArrows width="16" height="10" viewBox="0 0 16 10">
              <path d="M0 5l7-5v10zM8 5l7-5v10z" fill="#333333" />
            </PanelArrows>
            BROWSER
            <PanelToggle width="14" height="14" viewBox="0 0 14 14">
              <circle cx="7" cy="7" r="7" fill="#333333" />
              <rect x="3" y="5.800" width="8" height="2.400" fill="#f1f1f1" />
            </PanelToggle>
          </Panel>
          <Tree>
            <TreeRow $level={0}>
              <Expander>
                <Triangle open id="rootOpen" />
              </Expander>
              <Node>
                <NodeIcon>
                  <EyeIcon />
                </NodeIcon>
                <SelectedNode>
                  <SmallCube />
                  snowflake v1
                </SelectedNode>
                <RadioCell>
                  <svg width="20" height="20" viewBox="0 0 20 20">
                    <circle cx="10" cy="10" r="9" fill="#e4e6ec" stroke="#666666" strokeWidth="1.400" />
                    <circle cx="10" cy="10" r="3.500" fill="#333333" />
                  </svg>
                </RadioCell>
              </Node>
            </TreeRow>
            {treeRows.map((row) => (
              <TreeRow key={row.label} $level={row.level}>
                <Expander>{!row.leaf && <Triangle open={row.open} id={`open${row.label}`} />}</Expander>
                <Node>
                  {row.cells.map((cell, i) => (
                    <NodeIcon key={i} $width={cell.width} $pad={cell.kind === "gear" ? 5 : 4}>
                      {cellIcon(cell.kind)}
                    </NodeIcon>
                  ))}
                  <NodeLabel $right={row.right}>{row.label}</NodeLabel>
                </Node>
              </TreeRow>
            ))}
          </Tree>
        </LeftColumn>
        <BottomRow>
          <Panel>
            COMMENTS
            <PanelToggle width="14" height="14" viewBox="0 0 14 14">
              <circle cx="7" cy="7" r="7" fill="#333333" />
              <path d="M3 7h8M7 3v8" stroke="#f1f1f1" strokeWidth="2.200" />
            </PanelToggle>
          </Panel>
          <NavBar>
            {navItems.map(({ Icon, caret, ml }, i) => (
              <NavItem key={i} $ml={ml}>
                {caret ? <Caret $color="#333333" /> : <Icon />}
              </NavItem>
            ))}
          </NavBar>
          <BrandMark width="21" height="21" viewBox="0 0 21 21">
            <path d="M10.500 0a10.500 10.500 0 0 1 10.500 10.500V21H10.500a10.500 10.500 0 0 1 0-21z" fill="#0a0a0a" />
            <path d="M3 14c3-4 8-7 13-8-2 2-3 5-3 7-2-1-6 0-10 1z" fill="#ffffff" />
          </BrandMark>
        </BottomRow>
      </Viewport>

      <Timeline>
        <Controls>
          {transport.map((d) => (
            <svg key={d} width="24" height="26" viewBox="0 0 24 26">
              <path d={d} fill="#666666" />
            </svg>
          ))}
        </Controls>
        <Track>
          <TrackItems>
            {timelineItems.map(({ Icon, faded }, i) => (
              <TrackItem key={i} $faded={faded}>
                <Icon />
              </TrackItem>
            ))}
          </TrackItems>
          <Ruler>
            {Array.from({ length: 15 }, (_, i) => (
              <RulerStep key={i} $last={i === 14} />
            ))}
          </Ruler>
          <Marker width="20" height="48" viewBox="0 0 20 48">
            <path d="M1 0h18v8l-6 5h-1v35H9V13H7L1 8z" fill="#666666" />
          </Marker>
        </Track>
        <SettingsButton>
          <FaCog size={23} />
        </SettingsButton>
      </Timeline>
    </Page>
  );
}
